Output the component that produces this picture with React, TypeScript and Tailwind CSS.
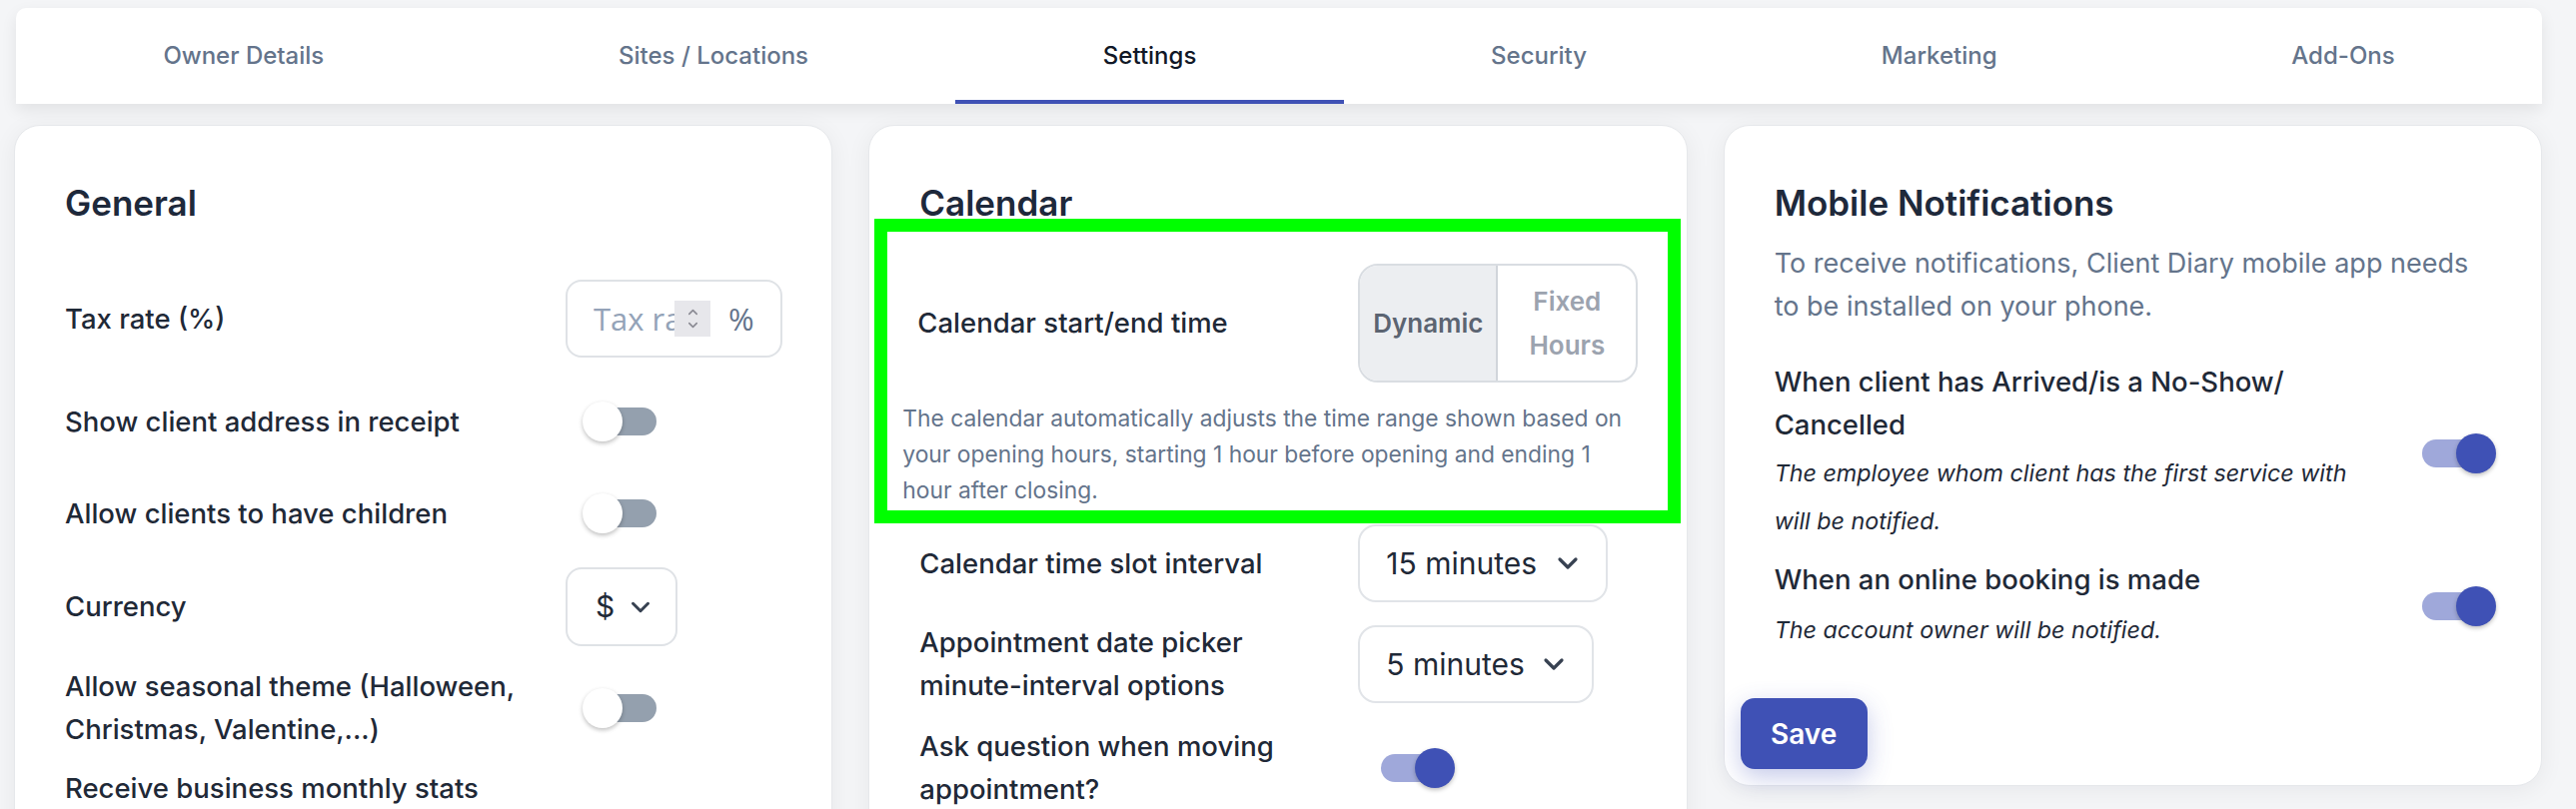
import { ChevronDown, ChevronUp } from "lucide-react";

// Settings page: tab strip on top, three setting cards below.

const tabs = ["Owner Details", "Sites / Locations", "Settings", "Security", "Marketing", "Add-Ons"];

function Toggle({ on, className = "" }: { on?: boolean; className?: string }) {
  return (
    <div className={`relative h-[40px] w-[74px] shrink-0 ${className}`}>
      <div
        className={`absolute top-[6px] h-[28px] w-[60px] rounded-full ${
          on ? "left-0 bg-[#9fa8da]" : "right-0 bg-[#94a0ae]"
        }`}
      />
      <div
        className={`absolute top-0 h-[40px] w-[40px] rounded-full shadow-[0_2px_4px_rgba(0,0,0,0.25)] ${
          on ? "right-0 bg-[#3f51b5]" : "left-0 bg-white"
        }`}
      />
    </div>
  );
}

function Select({ value, width }: { value: string; width: string }) {
  return (
    <div
      className={`flex h-[78px] items-center justify-between rounded-[18px] border-2 border-[#e1e4e8] bg-white pl-[26px] pr-[22px] text-[30px] text-[#1f2937] ${width}`}
    >
      <span>{value}</span>
      <ChevronDown size={32} strokeWidth={2.4} className="text-[#374151]" />
    </div>
  );
}

const label = "text-[27.5px] leading-[43px] font-medium text-[#1f2937]";
const heading = "text-[35px] leading-[32px] font-semibold text-[#1e293b]";
const card =
  "rounded-[26px] border border-[#e6e8eb] bg-white px-[50px] pt-[61px] shadow-[0_4px_24px_rgba(15,23,42,0.06)]";

export default function App() {
  return (
    <div className="h-screen overflow-hidden bg-[#f4f5f7] font-['Inter',sans-serif]">
      <div className="ml-[16px] w-[2528px] pt-[8px]">
        {/* Tabs */}
        <nav className="flex h-[96px] rounded-t-[10px] bg-white shadow-[0_6px_16px_rgba(0,0,0,0.08)]">
          {tabs.map((t) => {
            const active = t === "Settings";
            return (
              <div
                key={t}
                className={`relative flex flex-auto items-center justify-center text-[24px] font-medium ${
                  active ? "text-[#111827]" : "text-[#64748b]"
                }`}
              >
                {t}
                {active && <span className="absolute inset-x-0 bottom-0 h-[4px] bg-[#3f51b5]" />}
              </div>
            );
          })}
        </nav>

        <div className="-ml-[2px] mt-[21px] grid grid-cols-3 items-start gap-[36px]">
          {/* General */}
          <section className={`${card} pb-[40px]`}>
            <h2 className={heading}>General</h2>

            <div className="mt-[61px] grid h-[78px] grid-cols-[501px_217px] items-center">
              <span className={label}>Tax rate (%)</span>
              <div className="flex h-[78px] items-center rounded-[16px] border-2 border-[#dfe2e6] pl-[26px]">
                <span className="w-[81px] overflow-hidden whitespace-nowrap font-['Open_Sans',sans-serif] text-[31px] text-[#94a3b8]">
                  Tax rate
                </span>
                <span className="flex h-[36px] w-[36px] flex-col items-center justify-center bg-[#e7e7eb] text-[#8a8a93]">
                  <ChevronUp size={15} strokeWidth={2.5} className="-mb-[2px]" />
                  <ChevronDown size={15} strokeWidth={2.5} />
                </span>
                <span className="ml-[18px] font-['Open_Sans',sans-serif] text-[31px] text-[#64748b]">%</span>
              </div>
            </div>

            <div className="mt-[31px] grid h-[66px] grid-cols-[501px_217px] items-center">
              <span className={label}>Show client address in receipt</span>
              <Toggle className="ml-[17px]" />
            </div>

            <div className="mt-[26px] grid h-[66px] grid-cols-[501px_217px] items-center">
              <span className={label}>Allow clients to have children</span>
              <Toggle className="ml-[17px]" />
            </div>

            <div className="mt-[21px] grid h-[79px] grid-cols-[501px_217px] items-center">
              <span className={label}>Currency</span>
              <div className="flex h-[79px] w-[112px] items-center justify-between rounded-[16px] border-2 border-[#dfe2e6] pl-[28px] pr-[20px] text-[30px] text-[#1f2937]">
                <span>$</span>
                <ChevronDown size={30} strokeWidth={2.4} className="text-[#374151]" />
              </div>
            </div>

            <div className="mt-[19px] grid h-[86px] grid-cols-[501px_217px] items-center">
              <span className={label}>Allow seasonal theme (Halloween, Christmas, Valentine,...)</span>
              <Toggle className="ml-[17px]" />
            </div>

            <div className="mt-[16px] grid h-[128px] grid-cols-[501px_217px] items-center">
              <span className={`${label} self-start`}>Receive business monthly stats</span>
              <Toggle className="ml-[17px] mt-[40px]" />
            </div>
          </section>

          {/* Calendar */}
          <section className={`${card} pb-[40px]`}>
            <h2 className={heading}>Calendar</h2>

            <div className="-ml-[45px] -mr-[44px] border-[13px] border-[#00ff00] pb-[2px] pt-[32px]">
              <div className="grid grid-cols-[441px_280px] items-center px-[30px]">
                <span className={label}>Calendar start/end time</span>
                <div className="flex h-[119px] w-[280px] overflow-hidden rounded-[20px] border-2 border-[#d9dde2] text-[26px] font-semibold">
                  <div className="flex w-[138px] items-center justify-center border-r-2 border-[#d1d5db] bg-[#eceef1] text-[#5b6472]">
                    Dynamic
                  </div>
                  <div className="flex flex-1 items-center justify-center text-center leading-[44px] text-[#9ca3af]">
                    Fixed
                    <br />
                    Hours
                  </div>
                </div>
              </div>
              <p className="mt-[18px] pl-[15px] pr-[24px] text-[22.8px] leading-[36px] text-[#64748b]">
                The calendar automatically adjusts the time range shown based on your opening hours, starting 1 hour
                before opening and ending 1 hour after closing.
              </p>
            </div>

            <div className="mt-[1px] grid h-[78px] grid-cols-[439px_279px] items-center">
              <span className={label}>Calendar time slot interval</span>
              <Select value="15 minutes" width="w-[250px]" />
            </div>

            <div className="mt-[19px] grid h-[86px] grid-cols-[439px_279px] items-center">
              <span className={label}>
                Appointment date picker <span className="whitespace-nowrap">minute-interval</span> options
              </span>
              <Select value="5 minutes" width="w-[236px]" />
            </div>

            <div className="mt-[18px] grid h-[86px] grid-cols-[439px_279px] items-center">
              <span className={label}>Ask question when moving appointment?</span>
              <Toggle on className="ml-[23px]" />
            </div>
          </section>

          {/* Mobile Notifications */}
          <section className={`${card} pb-[16px]`}>
            <h2 className={heading}>Mobile Notifications</h2>
            <p className="mt-[23px] text-[27px] leading-[43px] text-[#64748b]">
              To receive notifications, Client Diary mobile app needs to be installed on your phone.
            </p>

            <div className="mt-[33px] flex items-center">
              <div className="w-[600px]">
                <div className={label}>When client has Arrived/is a No-Show/ Cancelled</div>
                <div className="mt-[3px] text-[23.3px] italic leading-[48px] text-[#1f2937]">
                  The employee whom client has the first service with will be notified.
                </div>
              </div>
              <Toggle on className="-mr-[5px] ml-auto" />
            </div>

            <div className="mt-[13px] flex items-center">
              <div className="w-[600px]">
                <div className={label}>When an online booking is made</div>
                <div className="mt-[5px] text-[23.3px] italic leading-[48px] text-[#1f2937]">
                  The account owner will be notified.
                </div>
              </div>
              <Toggle on className="-mr-[5px] ml-auto" />
            </div>

            <button className="-ml-[34px] mt-[44px] flex h-[71px] w-[127px] items-center justify-center rounded-[14px] bg-[#3f51b5] text-[28px] font-semibold text-white shadow-[0_8px_24px_rgba(63,81,181,0.3)]">
              Save
            </button>
          </section>
        </div>
      </div>
    </div>
  );
}
